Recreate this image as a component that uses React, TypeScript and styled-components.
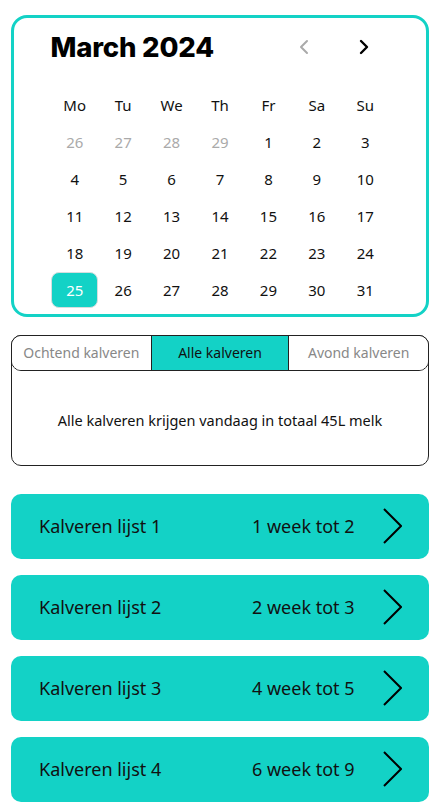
import React from "react";
import styled, { createGlobalStyle } from "styled-components";
import { ChevronLeft, ChevronRight } from "lucide-react";

const TEAL = "#13d2c6";

const Global = createGlobalStyle`
  html, body { margin: 0; padding: 0; background: #fff; }
  body { font-family: Roboto, "Noto Sans", sans-serif; color: #111; }
`;

const Page = styled.div`
  width: 442px;
  box-sizing: border-box;
  padding: 15px 13px 0 11px;
  display: flex;
  flex-direction: column;
`;

const CalendarCard = styled.div`
  border: 3px solid ${TEAL};
  border-radius: 16px;
  padding: 1px 0 5px;
  display: flex;
  flex-direction: column;
  align-items: center;
`;

const Header = styled.div`
  width: 339px;
  height: 56px;
  display: flex;
  align-items: center;
`;

const Title = styled.h1`
  margin: 0;
  flex: 1;
  font-family: Inter, "Liberation Sans", sans-serif;
  font-weight: 800;
  font-size: 27.5px;
  letter-spacing: -0.2px;
  color: #000;
`;

const NavButton = styled.button<{ $muted?: boolean }>`
  border: 0;
  background: none;
  padding: 0;
  width: 24px;
  height: 24px;
  display: flex;
  align-items: center;
  justify-content: center;
  color: ${(p) => (p.$muted ? "#aaa" : "#000")};
  margin-left: ${(p) => (p.$muted ? "0" : "36px")};
  margin-right: ${(p) => (p.$muted ? "0" : "14px")};
`;

const Grid = styled.div`
  margin-top: 11.5px;
  width: 339px;
  display: grid;
  grid-template-columns: repeat(7, 1fr);
  grid-auto-rows: 37px;
  font-family: "Noto Sans", sans-serif;
  font-size: 15px;
`;

const WeekDay = styled.div`
  display: flex;
  align-items: center;
  justify-content: center;
  color: #111;
`;

const Day = styled.div<{ $muted?: boolean; $selected?: boolean }>`
  display: flex;
  align-items: center;
  justify-content: center;
  margin: 0 0.5px 1px;
  border-radius: 8px;
  box-sizing: border-box;
  color: ${(p) => (p.$selected ? "#fff" : p.$muted ? "#aaa" : "#111")};
  background: ${(p) => (p.$selected ? TEAL : "transparent")};
  border: 1px solid ${(p) => (p.$selected ? "#d6dede" : "transparent")};
`;

const TabCard = styled.div`
  margin-top: 18px;
  border: 1px solid #222;
  border-radius: 10px;
  height: 131px;
  box-sizing: border-box;
  display: flex;
  flex-direction: column;
`;

const TabBar = styled.div`
  display: grid;
  grid-template-columns: 1fr 1fr 1fr;
  height: 34px;
  margin: -1px -1px 0;
  border: 1px solid #222;
  border-radius: 10px;
  overflow: hidden;
  font-family: "Noto Sans", sans-serif;
  font-size: 14px;
`;

const Tab = styled.div<{ $active?: boolean }>`
  display: flex;
  align-items: center;
  justify-content: center;
  color: ${(p) => (p.$active ? "#111" : "#888")};
  background: ${(p) => (p.$active ? TEAL : "#fff")};
  border-left: ${(p) => (p.$active ? "1px solid #222" : "0")};
  border-right: ${(p) => (p.$active ? "1px solid #222" : "0")};
`;

const TabBody = styled.div`
  flex: 1;
  display: flex;
  align-items: center;
  justify-content: center;
  padding-top: 4px;
  font-family: "Noto Sans", sans-serif;
  font-size: 14.5px;
  color: #111;
`;

const List = styled.div`
  margin-top: 28px;
  display: flex;
  flex-direction: column;
  gap: 16px;
`;

const ListButton = styled.div`
  height: 65px;
  border-radius: 10px;
  background: ${TEAL};
  padding: 0 27px 0 28px;
  display: grid;
  grid-template-columns: 1fr 131px 19px;
  align-items: center;
  font-family: "Noto Sans", sans-serif;
  font-size: 18px;
  color: #111;
`;

const Label = styled.span``;

const Chevron = styled.svg`
  display: block;
`;

const weekDays = ["Mo", "Tu", "We", "Th", "Fr", "Sa", "Su"];
const days: { n: number; muted?: boolean }[] = [
  { n: 26, muted: true },
  { n: 27, muted: true },
  { n: 28, muted: true },
  { n: 29, muted: true },
  ...Array.from({ length: 31 }, (_, i) => ({ n: i + 1 })),
];

const lists = [
  ["Kalveren lijst 1", "1 week tot 2"],
  ["Kalveren lijst 2", "2 week tot 3"],
  ["Kalveren lijst 3", "4 week tot 5"],
  ["Kalveren lijst 4", "6 week tot 9"],
];

export default function App() {
  return (
    <>
      <Global />
      <Page>
        <CalendarCard>
          <Header>
            <Title>March 2024</Title>
            <NavButton $muted>
              <ChevronLeft size={24} strokeWidth={2} />
            </NavButton>
            <NavButton>
              <ChevronRight size={24} strokeWidth={2.4} />
            </NavButton>
          </Header>
          <Grid>
            {weekDays.map((d) => (
              <WeekDay key={d}>{d}</WeekDay>
            ))}
            {days.map((d, i) => (
              <Day key={i} $muted={d.muted} $selected={!d.muted && d.n === 25}>
                {d.n}
              </Day>
            ))}
          </Grid>
        </CalendarCard>

        <TabCard>
          <TabBar>
            <Tab>Ochtend kalveren</Tab>
            <Tab $active>Alle kalveren</Tab>
            <Tab>Avond kalveren</Tab>
          </TabBar>
          <TabBody>Alle kalveren krijgen vandaag in totaal 45L melk</TabBody>
        </TabCard>

        <List>
          {lists.map(([a, b]) => (
            <ListButton key={a}>
              <Label>{a}</Label>
              <Label>{b}</Label>
              <Chevron width="19" height="36" viewBox="0 0 19 36" fill="none">
                <path d="M1 1 L18 18 L1 35" stroke="#000" strokeWidth="2" />
              </Chevron>
            </ListButton>
          ))}
        </List>
      </Page>
    </>
  );
}
